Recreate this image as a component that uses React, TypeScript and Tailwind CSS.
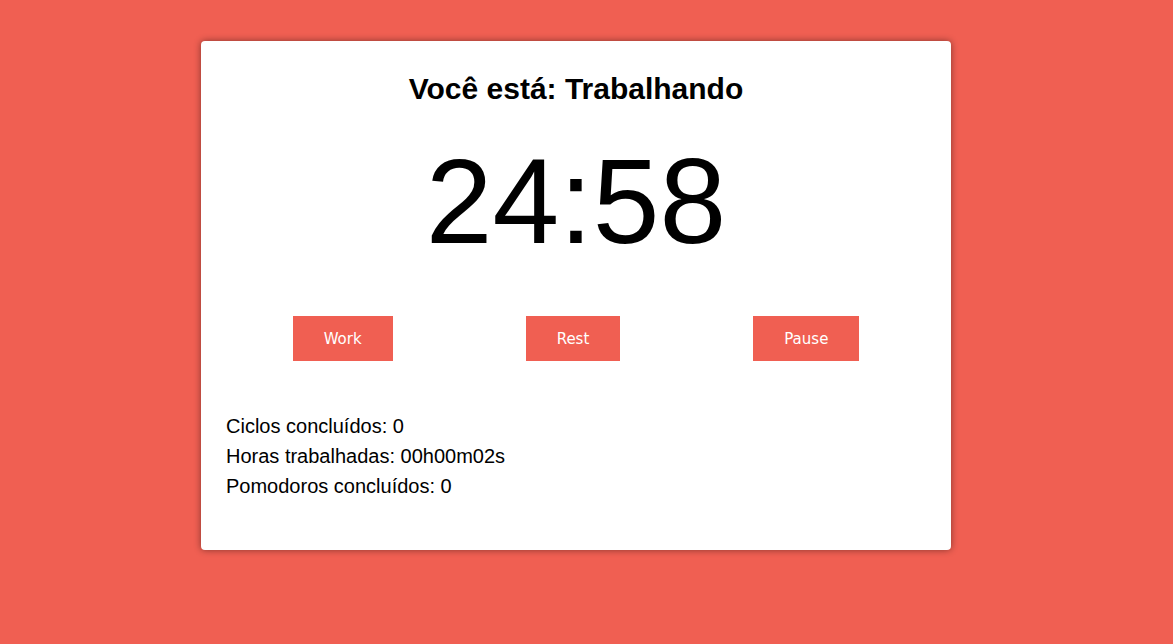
import React from "react";

export default function App() {
  return (
    <div className="min-h-[644px] w-full bg-[#f05f52] pt-[41px] pl-[201px]" style={{ fontFamily: '"Liberation Sans", Arial, sans-serif' }}>
      <div className="w-[750px] h-[509px] bg-white rounded-[4px] shadow-[0_0_7px_rgba(0,0,0,0.45)] px-[25px] pt-[31px] text-black">
        <h1 className="text-[30px] font-bold text-center leading-[34px]">Você está: Trabalhando</h1>
        <div className="mt-[26px] text-[120px] text-center leading-[138px]">24:58</div>
        <div className="mt-[46px] flex justify-around">
          {[
            ["Work", "w-[100px]"],
            ["Rest", "w-[94px]"],
            ["Pause", "w-[106px]"],
          ].map(([label, w]) => (
            <button
              key={label}
              className={`${w} h-[45px] bg-[#f05f52] text-white text-[15px] flex items-center justify-center pt-[2px]`}
              style={{ fontFamily: '"DejaVu Sans", Verdana, sans-serif' }}
            >
              {label}
            </button>
          ))}
        </div>
        <div className="mt-[50px] text-[20px] leading-[30px]">
          <p>Ciclos concluídos: 0</p>
          <p>Horas trabalhadas: 00h00m02s</p>
          <p>Pomodoros concluídos: 0</p>
        </div>
      </div>
    </div>
  );
}
